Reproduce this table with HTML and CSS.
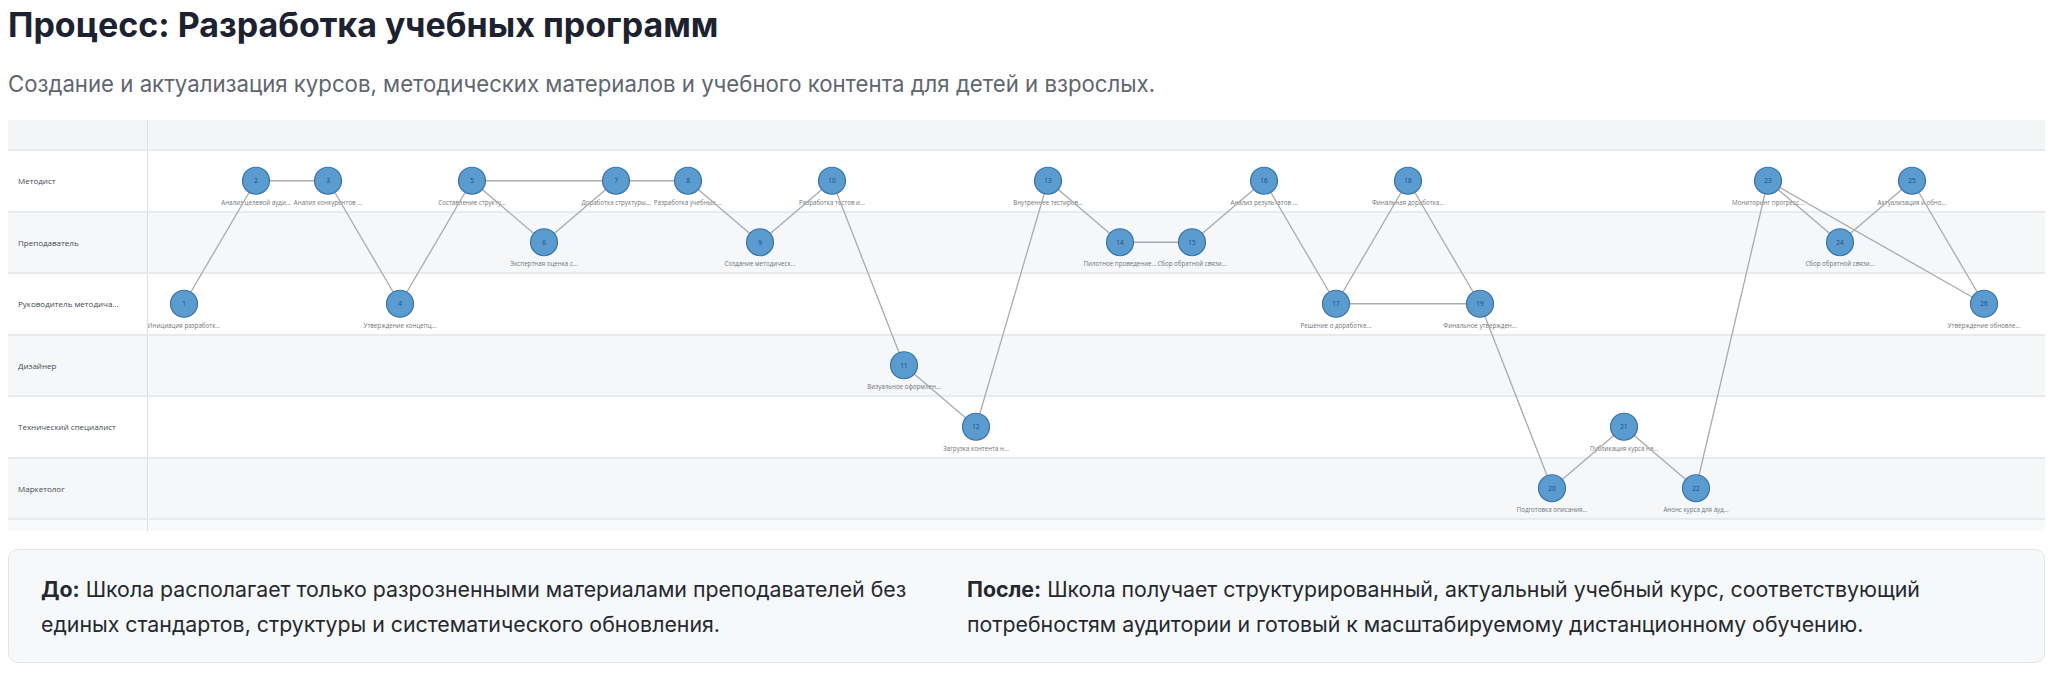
FILE: index.html
```html
<!DOCTYPE html>
<html lang="ru">
<head>
<meta charset="utf-8">
<title>Процесс: Разработка учебных программ</title>
<link rel="stylesheet" href="styles.css">
</head>
<body>
<div class="page">
  <h1 class="title">Процесс: Разработка учебных программ</h1>
  <p class="subtitle">Создание и актуализация курсов, методических материалов и учебного контента для детей и взрослых.</p>

  <div class="chart">
    <div class="row row-head"><div class="lane-label"></div><div class="lane-body"></div></div>
    <div class="row lane"><div class="lane-label">Методист</div><div class="lane-body"></div></div>
    <div class="row lane lane-alt"><div class="lane-label">Преподаватель</div><div class="lane-body"></div></div>
    <div class="row lane"><div class="lane-label">Руководитель методича...</div><div class="lane-body"></div></div>
    <div class="row lane lane-alt"><div class="lane-label">Дизайнер</div><div class="lane-body"></div></div>
    <div class="row lane"><div class="lane-label">Технический специалист</div><div class="lane-body"></div></div>
    <div class="row lane lane-alt"><div class="lane-label">Маркетолог</div><div class="lane-body"></div></div>
    <div class="row row-foot"><div class="lane-label"></div><div class="lane-body"></div></div>

    <svg class="flow" width="2037" height="411" xmlns="http://www.w3.org/2000/svg">
      <g class="node-labels">
        <text x="176" y="208">Инициация разработк...</text>
        <text x="248" y="85">Анализ целевой ауди...</text>
        <text x="320" y="85">Анализ конкурентов ...</text>
        <text x="392" y="208">Утверждение концепц...</text>
        <text x="464" y="85">Составление структу...</text>
        <text x="536" y="146">Экспертная оценка с...</text>
        <text x="608" y="85">Доработка структуры...</text>
        <text x="680" y="85">Разработка учебных ...</text>
        <text x="752" y="146">Создание методическ...</text>
        <text x="824" y="85">Разработка тестов и...</text>
        <text x="896" y="269">Визуальное оформлен...</text>
        <text x="968" y="331">Загрузка контента н...</text>
        <text x="1040" y="85">Внутреннее тестиров...</text>
        <text x="1112" y="146">Пилотное проведение...</text>
        <text x="1184" y="146">Сбор обратной связи...</text>
        <text x="1256" y="85">Анализ результатов ...</text>
        <text x="1328" y="208">Решение о доработке...</text>
        <text x="1400" y="85">Финальная доработка...</text>
        <text x="1472" y="208">Финальное утвержден...</text>
        <text x="1544" y="392">Подготовка описания...</text>
        <text x="1616" y="331">Публикация курса на...</text>
        <text x="1688" y="392">Анонс курса для ауд...</text>
        <text x="1760" y="85">Мониторинг прогресс...</text>
        <text x="1832" y="146">Сбор обратной связи...</text>
        <text x="1904" y="85">Актуализация и обно...</text>
        <text x="1976" y="208">Утверждение обновле...</text>
      </g>
      <g class="edges">
        <line x1="176" y1="183.75" x2="248" y2="60.75"/>
        <line x1="248" y1="60.75" x2="320" y2="60.75"/>
        <line x1="320" y1="60.75" x2="392" y2="183.75"/>
        <line x1="392" y1="183.75" x2="464" y2="60.75"/>
        <line x1="464" y1="60.75" x2="536" y2="122.25"/>
        <line x1="464" y1="60.75" x2="608" y2="60.75"/>
        <line x1="536" y1="122.25" x2="608" y2="60.75"/>
        <line x1="608" y1="60.75" x2="680" y2="60.75"/>
        <line x1="680" y1="60.75" x2="752" y2="122.25"/>
        <line x1="752" y1="122.25" x2="824" y2="60.75"/>
        <line x1="824" y1="60.75" x2="896" y2="245.25"/>
        <line x1="896" y1="245.25" x2="968" y2="306.75"/>
        <line x1="968" y1="306.75" x2="1040" y2="60.75"/>
        <line x1="1040" y1="60.75" x2="1112" y2="122.25"/>
        <line x1="1112" y1="122.25" x2="1184" y2="122.25"/>
        <line x1="1184" y1="122.25" x2="1256" y2="60.75"/>
        <line x1="1256" y1="60.75" x2="1328" y2="183.75"/>
        <line x1="1328" y1="183.75" x2="1400" y2="60.75"/>
        <line x1="1328" y1="183.75" x2="1472" y2="183.75"/>
        <line x1="1400" y1="60.75" x2="1472" y2="183.75"/>
        <line x1="1472" y1="183.75" x2="1544" y2="368.25"/>
        <line x1="1544" y1="368.25" x2="1616" y2="306.75"/>
        <line x1="1616" y1="306.75" x2="1688" y2="368.25"/>
        <line x1="1688" y1="368.25" x2="1760" y2="60.75"/>
        <line x1="1760" y1="60.75" x2="1832" y2="122.25"/>
        <line x1="1760" y1="60.75" x2="1976" y2="183.75"/>
        <line x1="1832" y1="122.25" x2="1904" y2="60.75"/>
        <line x1="1904" y1="60.75" x2="1976" y2="183.75"/>
      </g>
      <g class="nodes">
        <circle cx="176" cy="183.75" r="13.5"/>
        <circle cx="248" cy="60.75" r="13.5"/>
        <circle cx="320" cy="60.75" r="13.5"/>
        <circle cx="392" cy="183.75" r="13.5"/>
        <circle cx="464" cy="60.75" r="13.5"/>
        <circle cx="536" cy="122.25" r="13.5"/>
        <circle cx="608" cy="60.75" r="13.5"/>
        <circle cx="680" cy="60.75" r="13.5"/>
        <circle cx="752" cy="122.25" r="13.5"/>
        <circle cx="824" cy="60.75" r="13.5"/>
        <circle cx="896" cy="245.25" r="13.5"/>
        <circle cx="968" cy="306.75" r="13.5"/>
        <circle cx="1040" cy="60.75" r="13.5"/>
        <circle cx="1112" cy="122.25" r="13.5"/>
        <circle cx="1184" cy="122.25" r="13.5"/>
        <circle cx="1256" cy="60.75" r="13.5"/>
        <circle cx="1328" cy="183.75" r="13.5"/>
        <circle cx="1400" cy="60.75" r="13.5"/>
        <circle cx="1472" cy="183.75" r="13.5"/>
        <circle cx="1544" cy="368.25" r="13.5"/>
        <circle cx="1616" cy="306.75" r="13.5"/>
        <circle cx="1688" cy="368.25" r="13.5"/>
        <circle cx="1760" cy="60.75" r="13.5"/>
        <circle cx="1832" cy="122.25" r="13.5"/>
        <circle cx="1904" cy="60.75" r="13.5"/>
        <circle cx="1976" cy="183.75" r="13.5"/>
      </g>
      <g class="node-nums">
        <text x="176" y="186">1</text>
        <text x="248" y="63">2</text>
        <text x="320" y="63">3</text>
        <text x="392" y="186">4</text>
        <text x="464" y="63">5</text>
        <text x="536" y="124.5">6</text>
        <text x="608" y="63">7</text>
        <text x="680" y="63">8</text>
        <text x="752" y="124.5">9</text>
        <text x="824" y="63">10</text>
        <text x="896" y="247.5">11</text>
        <text x="968" y="309">12</text>
        <text x="1040" y="63">13</text>
        <text x="1112" y="124.5">14</text>
        <text x="1184" y="124.5">15</text>
        <text x="1256" y="63">16</text>
        <text x="1328" y="186">17</text>
        <text x="1400" y="63">18</text>
        <text x="1472" y="186">19</text>
        <text x="1544" y="370.5">20</text>
        <text x="1616" y="309">21</text>
        <text x="1688" y="370.5">22</text>
        <text x="1760" y="63">23</text>
        <text x="1832" y="124.5">24</text>
        <text x="1904" y="63">25</text>
        <text x="1976" y="186">26</text>
      </g>
    </svg>
  </div>

  <div class="summary">
    <p class="summary-col"><b>До:</b> Школа располагает только разрозненными материалами преподавателей без единых стандартов, структуры и систематического обновления.</p>
    <p class="summary-col"><b>После:</b> Школа получает структурированный, актуальный учебный курс, соответствующий потребностям аудитории и готовый к масштабируемому дистанционному обучению.</p>
  </div>
</div>
</body>
</html>
```

FILE: styles.css
```css
* { box-sizing: border-box; }

body {
  margin: 8px;
  background: #ffffff;
  font-family: "Inter", "Roboto", "Liberation Sans", sans-serif;
  color: #1f2328;
}

.page {
  width: 2037px;
}

.title {
  margin: 0;
  font-size: 34px;
  line-height: 34px;
  font-weight: 700;
  color: #1c2230;
}

.subtitle {
  margin: 28px 0 0;
  font-size: 22.2px;
  line-height: 28px;
  color: #5f6670;
}

.chart {
  position: relative;
  margin-top: 22px;
  height: 411px;
  display: flex;
  flex-direction: column;
}

.row {
  display: flex;
  flex: none;
}

.row-head {
  height: 29px;
  background: #f3f5f7;
}

.lane {
  height: 61.5px;
  border-top: 2px solid #e8ebee;
  background: #ffffff;
}

.lane-alt {
  background: #f6f7f9;
}

.row-foot {
  flex: 1;
  border-top: 2px solid #e8ebee;
  background: #f8f9fa;
}

.lane-label {
  width: 140px;
  flex: none;
  border-right: 1px solid #dde1e5;
  padding-left: 10px;
  display: flex;
  align-items: center;
  font-family: "Open Sans", "DejaVu Sans", sans-serif;
  font-size: 8px;
  color: #444a50;
  white-space: nowrap;
}

.lane-body {
  flex: 1;
}

.flow {
  position: absolute;
  left: 0;
  top: 0;
  overflow: visible;
}

.node-labels text {
  font-family: "Open Sans", "DejaVu Sans", sans-serif;
  font-size: 6.2px;
  fill: #707478;
  text-anchor: middle;
}

.edges line {
  stroke: #a8abae;
  stroke-width: 1.3;
}

.nodes circle {
  fill: #5a9bd0;
  stroke: #3a75a8;
  stroke-width: 1.2;
}

.node-nums text {
  font-family: "Open Sans", "DejaVu Sans", sans-serif;
  font-size: 6.5px;
  fill: #1d4a72;
  text-anchor: middle;
}

.summary {
  margin-top: 18px;
  display: grid;
  grid-template-columns: 910px 1fr;
  column-gap: 16px;
  padding: 22px 32px 20px;
  background: #f7f8f9;
  border: 1px solid #e3e6e9;
  border-radius: 10px;
}

.summary-col {
  margin: 0;
  font-size: 21.3px;
  line-height: 35px;
  color: #24292f;
}

.summary-col b {
  font-weight: 700;
}
```
